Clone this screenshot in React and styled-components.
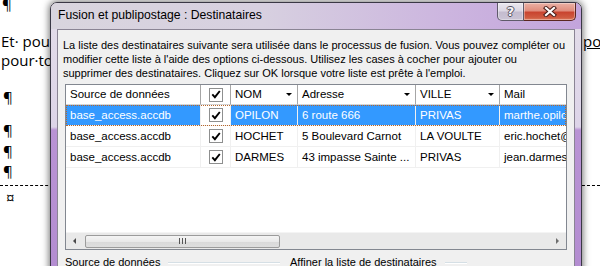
import styled, { createGlobalStyle } from 'styled-components';

const Global = createGlobalStyle`
  html, body { margin: 0; padding: 0; background: #fff; }
  body { width: 600px; height: 266px; overflow: hidden; }
`;

const COLS = '135px 30px 67px 118px 84px 140px';

const Page = styled.div`
  position: relative;
  width: 600px;
  height: 266px;
  overflow: hidden;
  background: #fff;
`;

/* ---------- document behind the dialog ---------- */
const Doc = styled.div`
  font-family: "Open Sans", "Noto Sans", sans-serif;
  font-size: 15px;
  line-height: 19px;
  color: #000;
`;

const Line = styled.div`
  display: flex;
  justify-content: space-between;
  white-space: nowrap;
  margin-top: ${p => p.$mt || 0}px;
  padding-left: ${p => p.$indent || 1}px;
`;

const Misspelled = styled.span`
  width: 17px;
  overflow: hidden;
  text-decoration: underline;
`;

const CellBorder = styled.div`
  margin-top: ${p => p.$mt || 0}px;
  border-top: 1px dashed #000;
`;

/* ---------- dialog window ---------- */
const Window = styled.div`
  position: absolute;
  left: 50px;
  top: 2px;
  width: 532px;
  height: 300px;
  box-sizing: border-box;
  display: flex;
  flex-direction: column;
  border: 1px solid #3a3845;
  border-radius: 7px 7px 0 0;
  background: linear-gradient(180deg, #e3dde9 0, #ddd4e8 124px, #b993d4 127px, #b28bd0 100%);
  box-shadow: 0 0 7px 1px rgba(0, 0, 0, 0.55);
  font-family: "Liberation Sans", Arial, sans-serif;
  color: #000;
`;

const TitleBar = styled.div`
  height: 26px;
  flex: none;
  display: flex;
  align-items: flex-start;
  padding: 0 5px 0 7px;
  border-radius: 6px 6px 0 0;
  background: linear-gradient(90deg, #d9d5de 0%, #d7d0e0 40%, #ccb5df 75%, #c3a4dc 100%);
`;

const Title = styled.div`
  flex: 1;
  font-size: 12.2px;
  line-height: 14px;
  padding-top: 5px;
  white-space: nowrap;
`;

const CaptionButton = styled.div`
  height: 18px;
  box-sizing: border-box;
  display: flex;
  align-items: center;
  justify-content: center;
  border: 1px solid ${p => (p.$close ? '#5b2620' : '#5f5a6a')};
  border-top: none;
  width: ${p => (p.$close ? 52 : 27)}px;
  border-radius: ${p => (p.$close ? '0 0 5px 0' : '0 0 0 5px')};
  border-left-width: ${p => (p.$close ? 0 : 1)}px;
  background: ${p =>
    p.$close
      ? 'linear-gradient(180deg, #eab1a5 0%, #e08d7d 45%, #c9442f 55%, #cf5a40 85%, #dd7a5c 100%)'
      : 'linear-gradient(180deg, #ebe8ef 0%, #dcd7e3 45%, #c4bccf 55%, #cbc4d5 100%)'};
  box-shadow: inset 0 0 0 1px rgba(255, 255, 255, 0.35);
`;

const HelpGlyph = styled.span`
  font-family: "DejaVu Sans", sans-serif;
  font-weight: bold;
  font-size: 13px;
  line-height: 13px;
  color: #f6f4f8;
  text-shadow: -1px 0 #55505e, 1px 0 #55505e, 0 -1px #55505e, 0 1px #55505e;
`;

const Client = styled.div`
  flex: 1;
  margin: 0 6px;
  display: flex;
  flex-direction: column;
  border: 1px solid #8a8494;
  border-bottom: none;
  background: #f0f0f0;
`;

const Intro = styled.div`
  padding: 8px 0 0 5px;
  font-size: 11px;
  line-height: 14px;
  white-space: nowrap;
`;

/* ---------- list ---------- */
const Grid = styled.div`
  margin: 4px 7px 0 7px;
  height: 166px;
  box-sizing: border-box;
  border: 1px solid #828790;
  background: #fff;
  display: flex;
  flex-direction: column;
  overflow: hidden;
  font-size: 11.5px;
`;

const HeaderRow = styled.div`
  display: grid;
  grid-template-columns: ${COLS};
  height: 20px;
  flex: none;
`;

const HeadCell = styled.div`
  display: flex;
  align-items: center;
  justify-content: ${p => (p.$center ? 'center' : 'space-between')};
  padding: ${p => (p.$center ? '0' : '0 5px 2px 4px')};
  border-right: 1px solid #a6a6a6;
  border-bottom: 1px solid #d5d5d5;
  white-space: nowrap;
  overflow: hidden;
`;

const SortArrow = styled.span`
  width: 0;
  height: 0;
  margin-top: 2px;
  border-left: 3.5px solid transparent;
  border-right: 3.5px solid transparent;
  border-top: 3.5px solid #000;
`;

const Row = styled.div`
  display: grid;
  grid-template-columns: ${COLS};
  height: 21px;
  flex: none;
  outline: ${p => (p.$selected ? '1px dotted #b8662a' : 'none')};
  outline-offset: -1px;
`;

const Cell = styled.div`
  display: flex;
  align-items: center;
  justify-content: ${p => (p.$center ? 'center' : 'flex-start')};
  padding-left: ${p => (p.$center ? 0 : 4)}px;
  border-right: 1px solid #f0f0f0;
  border-bottom: 1px solid #f0f0f0;
  background: ${p => (p.$selected ? '#3399ff' : '#fff')};
  color: ${p => (p.$selected ? '#fff' : '#000')};
  white-space: nowrap;
  overflow: hidden;
`;

const Box = styled.span`
  width: 14px;
  height: 14px;
  box-sizing: border-box;
  border: 1px solid #8e8f8f;
  background: #fff;
  display: flex;
  align-items: center;
  justify-content: center;
`;

const Filler = styled.div`
  flex: 1;
`;

const HScroll = styled.div`
  height: 16px;
  flex: none;
  display: flex;
  align-items: center;
  background: #e9e9e9;
  border-top: 1px solid #f4f4f4;
`;

const ScrollArrow = styled.div`
  width: 17px;
  display: flex;
  justify-content: center;
  &::before {
    content: '';
    border-top: 3.5px solid transparent;
    border-bottom: 3.5px solid transparent;
    ${p => (p.$right ? 'border-left: 3.5px solid #6e6e6e;' : 'border-right: 3.5px solid #4a4a4a;')}
  }
`;

const Track = styled.div`
  flex: 1;
  display: flex;
  align-items: center;
  padding-left: 2px;
`;

const Thumb = styled.div`
  width: 195px;
  height: 13px;
  box-sizing: border-box;
  border: 1px solid #9b9b9b;
  border-radius: 2px;
  background: linear-gradient(180deg, #f4f4f4 0%, #e9e9e9 50%, #d9d9d9 51%, #dedede 100%);
  display: flex;
  align-items: center;
  justify-content: center;
  gap: 2px;
`;

const Grip = styled.span`
  width: 1px;
  height: 6px;
  background: #555;
`;

/* ---------- group titles ---------- */
const Groups = styled.div`
  display: flex;
  gap: 10px;
  margin: 5px 0 0 7px;
`;

const Group = styled.div`
  width: ${p => p.$w}px;
  display: flex;
  align-items: center;
  gap: 8px;
  font-size: 11px;
  line-height: 14px;
  white-space: nowrap;
`;

const Rule = styled.span`
  flex: 1;
  height: 1px;
  margin-top: 1px;
  background: #d5dfe5;
  box-shadow: 0 1px 0 #fff;
`;

const rows = [
  { nom: 'OPILON', adr: '6 route 666', ville: 'PRIVAS', mail: 'marthe.opilon@orange.fr', selected: true },
  { nom: 'HOCHET', adr: '5 Boulevard Carnot', ville: 'LA VOULTE', mail: 'eric.hochet@free.fr' },
  { nom: 'DARMES', adr: '43 impasse Sainte ...', ville: 'PRIVAS', mail: 'jean.darmes@gmail.com' },
];

function Check() {
  return (
    <Box>
      <svg width="10" height="9" viewBox="0 0 10 9">
        <path d="M1.3 4.4 L3.9 7.2 L8.8 1" fill="none" stroke="#000" strokeWidth="1.9" />
      </svg>
    </Box>
  );
}

function CloseGlyph() {
  return (
    <svg width="14" height="11" viewBox="0 0 14 11">
      <path d="M3 2 L11 9 M11 2 L3 9" stroke="#4a1f1a" strokeWidth="4.2" strokeLinecap="square" />
      <path d="M3 2 L11 9 M11 2 L3 9" stroke="#fff" strokeWidth="2.2" strokeLinecap="square" />
    </svg>
  );
}

export default function App() {
  return (
    <Page>
      <Global />
      <Doc>
        <Line $mt={-5} $indent={2}>¶</Line>
        <Line $mt={18}>
          <span>Et· pour recevoir les informations</span>
          <Misspelled>pouvoir</Misspelled>
        </Line>
        <Line>pour·tous·les·destinataires</Line>
        <Line $mt={18} $indent={3}>¶</Line>
        <Line $mt={14} $indent={3}>¶</Line>
        <Line $mt={2} $indent={3}>¶</Line>
        <Line $mt={1} $indent={3}>¶</Line>
        <CellBorder $mt={4} />
        <Line $mt={2} $indent={6}>¤</Line>
      </Doc>

      <Window>
        <TitleBar>
          <Title>Fusion et publipostage : Destinataires</Title>
          <CaptionButton>
            <HelpGlyph>?</HelpGlyph>
          </CaptionButton>
          <CaptionButton $close>
            <CloseGlyph />
          </CaptionButton>
        </TitleBar>

        <Client>
          <Intro>
            La liste des destinataires suivante sera utilisée dans le processus de fusion. Vous pouvez compléter ou
            <br />
            modifier cette liste à l'aide des options ci-dessous. Utilisez les cases à cocher pour ajouter ou
            <br />
            supprimer des destinataires. Cliquez sur OK lorsque votre liste est prête à l'emploi.
          </Intro>

          <Grid>
            <HeaderRow>
              <HeadCell>Source de données</HeadCell>
              <HeadCell $center><Check /></HeadCell>
              <HeadCell>NOM<SortArrow /></HeadCell>
              <HeadCell>Adresse<SortArrow /></HeadCell>
              <HeadCell>VILLE<SortArrow /></HeadCell>
              <HeadCell>Mail</HeadCell>
            </HeaderRow>
            {rows.map(r => (
              <Row key={r.nom} $selected={r.selected}>
                <Cell $selected={r.selected}>base_access.accdb</Cell>
                <Cell $center><Check /></Cell>
                <Cell $selected={r.selected}>{r.nom}</Cell>
                <Cell $selected={r.selected}>{r.adr}</Cell>
                <Cell $selected={r.selected}>{r.ville}</Cell>
                <Cell $selected={r.selected}>{r.mail}</Cell>
              </Row>
            ))}
            <Filler />
            <HScroll>
              <ScrollArrow />
              <Track>
                <Thumb>
                  <Grip />
                  <Grip />
                  <Grip />
                </Thumb>
              </Track>
              <ScrollArrow $right />
            </HScroll>
          </Grid>

          <Groups>
            <Group $w={215}>Source de données<Rule /></Group>
            <Group $w={177}>Affiner la liste de destinataires<Rule /></Group>
          </Groups>
        </Client>
      </Window>
    </Page>
  );
}
